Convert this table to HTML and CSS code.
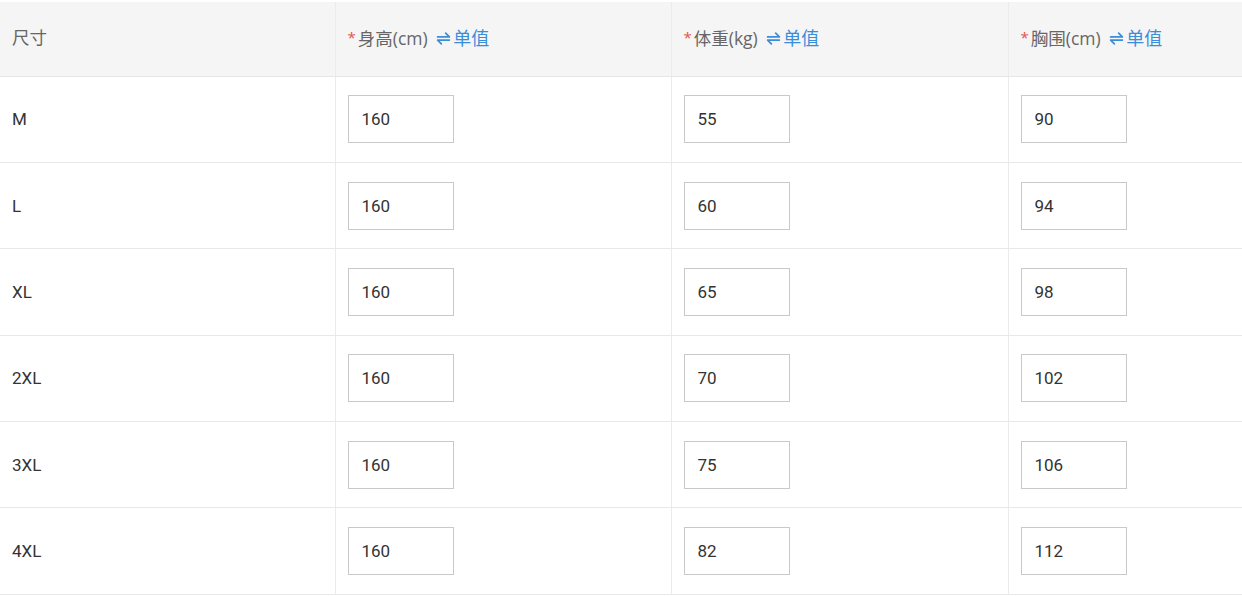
FILE: index.html
```html
<!DOCTYPE html>
<html lang="zh">
<head>
<meta charset="utf-8">
<link rel="stylesheet" href="styles.css">
</head>
<body>
<table class="size-table">
  <colgroup>
    <col class="c1"><col class="c2"><col class="c3"><col class="c4">
  </colgroup>
  <thead>
    <tr>
      <th>尺寸</th>
      <th><span class="req">*</span>身高(cm) <a class="toggle"><svg class="ic" viewBox="0 0 14 14" width="15" height="15"><path d="M1.5 5.5H12.5L9 2M12.5 8.5H1.5L5 12" fill="none" stroke="currentColor" stroke-width="1.6" stroke-linecap="round" stroke-linejoin="round"/></svg>单值</a></th>
      <th><span class="req">*</span>体重(kg) <a class="toggle"><svg class="ic" viewBox="0 0 14 14" width="15" height="15"><path d="M1.5 5.5H12.5L9 2M12.5 8.5H1.5L5 12" fill="none" stroke="currentColor" stroke-width="1.6" stroke-linecap="round" stroke-linejoin="round"/></svg>单值</a></th>
      <th><span class="req">*</span>胸围(cm) <a class="toggle"><svg class="ic" viewBox="0 0 14 14" width="15" height="15"><path d="M1.5 5.5H12.5L9 2M12.5 8.5H1.5L5 12" fill="none" stroke="currentColor" stroke-width="1.6" stroke-linecap="round" stroke-linejoin="round"/></svg>单值</a></th>
    </tr>
  </thead>
  <tbody>
    <tr><td>M</td><td><input class="box" value="160"></td><td><input class="box" value="55"></td><td><input class="box" value="90"></td></tr>
    <tr><td>L</td><td><input class="box" value="160"></td><td><input class="box" value="60"></td><td><input class="box" value="94"></td></tr>
    <tr><td>XL</td><td><input class="box" value="160"></td><td><input class="box" value="65"></td><td><input class="box" value="98"></td></tr>
    <tr><td>2XL</td><td><input class="box" value="160"></td><td><input class="box" value="70"></td><td><input class="box" value="102"></td></tr>
    <tr><td>3XL</td><td><input class="box" value="160"></td><td><input class="box" value="75"></td><td><input class="box" value="106"></td></tr>
    <tr><td>4XL</td><td><input class="box" value="160"></td><td><input class="box" value="82"></td><td><input class="box" value="112"></td></tr>
  </tbody>
</table>
</body>
</html>
```
FILE: styles.css
```css
html, body {
  margin: 0;
  padding: 0;
  background: #fff;
}
body {
  font-family: Roboto, "Noto Sans CJK SC", sans-serif;
  color: #333;
}
.size-table {
  width: 1242px;
  border-collapse: collapse;
  table-layout: fixed;
  margin-top: 2px;
}
.c1 { width: 335px; }
.c2 { width: 336px; }
.c3 { width: 337px; }
.c4 { width: 234px; }
.size-table th {
  background: #f5f5f5;
  height: 74px;
  padding: 0 0 4px 12px;
  box-sizing: border-box;
  text-align: left;
  font-weight: normal;
  font-family: "Open Sans", "Noto Sans CJK SC", sans-serif;
  font-size: 17.5px;
  color: #666;
  border-left: 1px solid #ebebeb;
  border-bottom: 1px solid #e6e6e6;
  white-space: nowrap;
}
.size-table td {
  height: 85.4px;
  padding: 0 0 0 12px;
  font-size: 17px;
  color: #333;
  border-left: 1px solid #ebebeb;
  border-bottom: 1px solid #e8e8e8;
}
.size-table th:first-child,
.size-table td:first-child {
  border-left: none;
}
.req {
  color: #e2544f;
  margin-right: 2px;
  font-size: 15px;
  position: relative;
  top: -2px;
}
.toggle {
  color: #3a8dd8;
  margin-left: 4px;
  font-size: 18px;
}
.ic {
  vertical-align: -1px;
  margin-right: 2px;
}
.box {
  box-sizing: border-box;
  width: 106px;
  height: 48px;
  border: 1px solid #c9c9c9;
  padding: 0 0 0 13px;
  font-family: Roboto, "Noto Sans CJK SC", sans-serif;
  font-size: 17px;
  color: #333;
  background: #fff;
  outline: none;
  display: block;
}
```
